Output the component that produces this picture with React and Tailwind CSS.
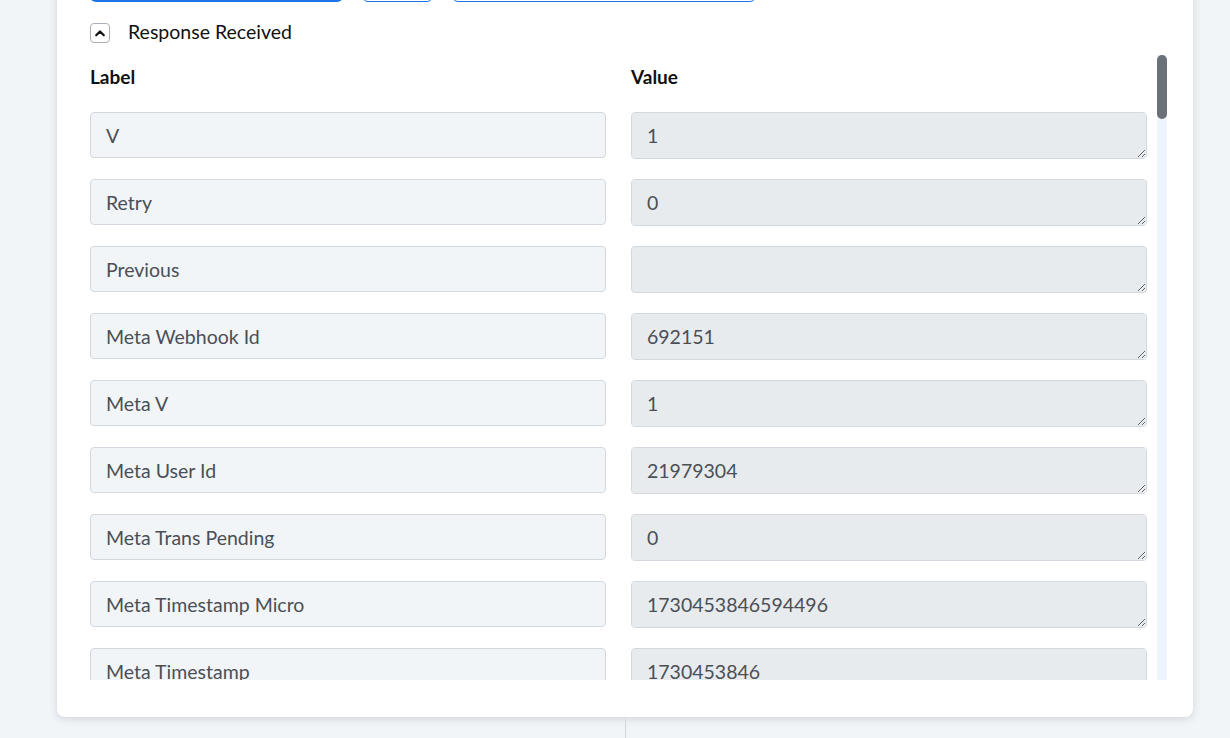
import React from 'react';

const baseFields = [
  ['V', '1'],
  ['Retry', '0'],
  ['Previous', ''],
  ['Meta Webhook Id', '692151'],
  ['Meta V', '1'],
  ['Meta User Id', '21979304'],
  ['Meta Trans Pending', '0'],
  ['Meta Timestamp Micro', '1730453846594496'],
  ['Meta Timestamp', '1730453846'],
  ['Meta Remote Ip', '34.74.112.9'],
  ['Meta Event', 'payment.succeeded'],
  ['Meta Environment', 'production'],
];

function ChevronUp() {
  return (
    <svg width="12" height="12" viewBox="0 0 12 12" fill="none">
      <path d="M2.2 8.3L6 4.5L9.8 8.3" stroke="#111" strokeWidth="2.2" strokeLinecap="round" strokeLinejoin="round" />
    </svg>
  );
}

// long payload, so the thumb stays short
function Scrollbar() {
  return (
    <div className="w-[10px] shrink-0 bg-[#edf4fd]">
      <div className="h-[64px] rounded-full bg-[#6b7178]" />
    </div>
  );
}

export default function App() {
  return (
    <div className="h-[738px] overflow-hidden bg-[#f2f5f8] font-['Lato',sans-serif]">
      <div className="ml-[57px] w-[1136px] rounded-b-[8px] bg-white shadow-[0_2px_8px_rgba(15,23,42,0.14)] px-[33px] pb-[37px]">
        {/* action buttons, scrolled mostly out of view */}
        <div className="-mt-[38px] flex gap-[19px] h-[40px]">
          <div className="w-[253px] rounded-[6px] bg-[#1a73e8]" />
          <div className="w-[71px] rounded-[6px] border border-[#1a73e8]" />
          <div className="w-[304px] rounded-[6px] border border-[#1a73e8]" />
        </div>

        <div className="mt-[21px] flex items-center gap-[18px] h-[20px]">
          <button className="w-[20px] h-[20px] rounded-[4px] border border-[#a9afb6] flex items-center justify-center">
            <ChevronUp />
          </button>
          <span className="-mt-[3px] text-[19.5px] leading-[20px] text-[#111]">Response Received</span>
        </div>

        <div className="mt-[12px] h-[625px] w-[1077px] flex gap-[10px]">
          <div className="flex-1 overflow-hidden">
            <div className="grid grid-cols-[516px_516px] gap-x-[25px] pt-[10px] pb-[23px] text-[19px] font-bold text-[#111] leading-[24px]">
              <span>Label</span>
              <span>Value</span>
            </div>
            <div className="flex flex-col gap-[20px]">
              {baseFields.map(([label, value], i) => (
                <div key={i} className="grid grid-cols-[516px_516px] gap-x-[25px] items-start">
                  <input
                    readOnly
                    value={label}
                    className="h-[46px] rounded-[4px] border border-[#d3d8de] bg-[#f2f5f8] px-[15px] text-[19.5px] text-[#4a4f56] outline-none"
                  />
                  <textarea
                    readOnly
                    value={value}
                    rows={1}
                    className="h-[47px] rounded-[4px] border border-[#d3d8de] bg-[#e8ebee] px-[15px] py-[10px] text-[19.5px] leading-[26px] text-[#4a4f56] outline-none"
                  />
                </div>
              ))}
            </div>
          </div>
          <Scrollbar />
        </div>
      </div>
      <div className="ml-[625px] h-[30px] w-px bg-[#d3d7dc]" />
    </div>
  );
}
